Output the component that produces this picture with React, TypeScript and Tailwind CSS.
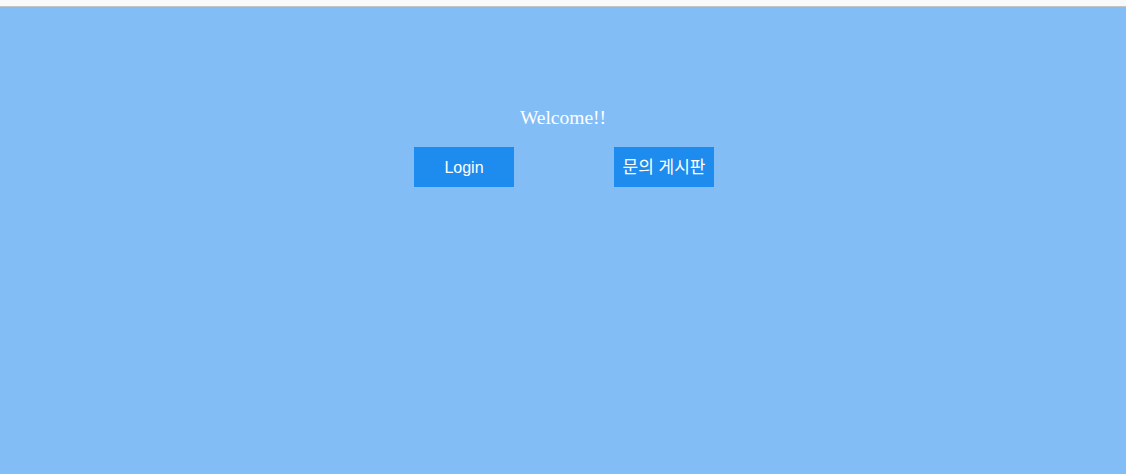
const App = () => {
  return (
    <div className="h-[474px] flex flex-col bg-[#82bdf6]">
      <div className="h-[6px] bg-[#f8f9fa] border-b border-[#c4c4c4] box-content" />
      <div className="flex flex-col items-center pt-[98px]">
        <h1
          className="text-[19.5px] leading-[26px] text-white"
          style={{ fontFamily: '"Liberation Serif", serif' }}
        >
          Welcome!!
        </h1>
        <div
          className="flex gap-[100px] mt-[16px] ml-[2px]"
          style={{ fontFamily: '"Liberation Sans", "Noto Sans CJK KR", sans-serif' }}
        >
          <button className="w-[100px] h-[40px] pt-[2px] bg-[#1e8bef] text-white text-[16px]">Login</button>
          <button className="w-[100px] h-[40px] pt-[2px] bg-[#1e8bef] text-white text-[17px] whitespace-nowrap">문의 게시판</button>
        </div>
      </div>
    </div>
  );
};

export default App;
